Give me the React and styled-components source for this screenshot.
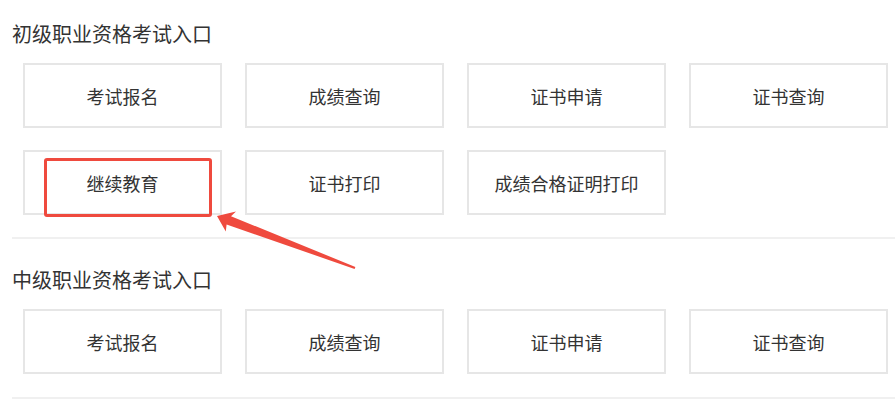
import React from 'react';
import styled, { createGlobalStyle } from 'styled-components';

const GlobalStyle = createGlobalStyle`
  html, body {
    margin: 0;
    padding: 0;
    background: #fff;
  }
  body {
    font-family: "Noto Sans CJK SC", "Microsoft YaHei", sans-serif;
    color: #333;
  }
`;

const Page = styled.div`
  position: relative;
  width: 895px;
  height: 406px;
  overflow: hidden;
  background: #fff;
`;

const Section = styled.section`
  margin-left: 12px;
  padding-bottom: ${(p) => p.$bottom}px;
  border-bottom: 2px solid #f0f0f0;
`;

const Title = styled.h2`
  margin: 0;
  padding-top: ${(p) => p.$top}px;
  font-size: 20px;
  line-height: 28px;
  font-weight: normal;
  color: #333;
`;

const Grid = styled.div`
  display: grid;
  grid-template-columns: repeat(4, 199px);
  grid-auto-rows: 65px;
  column-gap: 23px;
  row-gap: 22px;
  margin-top: 15px;
  padding-left: 11px;
`;

const Entry = styled.a`
  position: relative;
  display: flex;
  align-items: center;
  justify-content: center;
  box-sizing: border-box;
  border: 2px solid #e6e6e6;
  font-size: 18px;
  color: #333;
  text-decoration: none;
  cursor: pointer;
`;

const Highlight = styled.span`
  position: absolute;
  left: 19px;
  top: 6px;
  width: 168px;
  height: 59px;
  box-sizing: border-box;
  border: 3px solid #ef4a3e;
  border-radius: 3px;
`;

const Arrow = styled.svg`
  position: absolute;
  left: 205px;
  top: 205px;
  width: 160px;
  height: 70px;
  pointer-events: none;
`;

const sections = [
  {
    title: '初级职业资格考试入口',
    top: 20,
    bottom: 22,
    items: ['考试报名', '成绩查询', '证书申请', '证书查询', '继续教育', '证书打印', '成绩合格证明打印'],
  },
  {
    title: '中级职业资格考试入口',
    top: 27,
    bottom: 23,
    items: ['考试报名', '成绩查询', '证书申请', '证书查询'],
  },
];

const App = () => (
  <Page>
    <GlobalStyle />
    {sections.map((s, i) => (
      <Section key={i} $bottom={s.bottom}>
        <Title $top={s.top}>{s.title}</Title>
        <Grid>
          {s.items.map((label) => (
            <Entry key={label}>
              {label}
              {i === 0 && label === '继续教育' && <Highlight />}
            </Entry>
          ))}
        </Grid>
      </Section>
    ))}
    <Arrow viewBox="205 205 160 70">
      <polygon
        fill="#ef4a3e"
        points="217,216 236,211.5 231,216.2 355.4,267 354.6,268.9 226.6,224.6 225.8,231.6"
      />
    </Arrow>
  </Page>
);

export default App;
